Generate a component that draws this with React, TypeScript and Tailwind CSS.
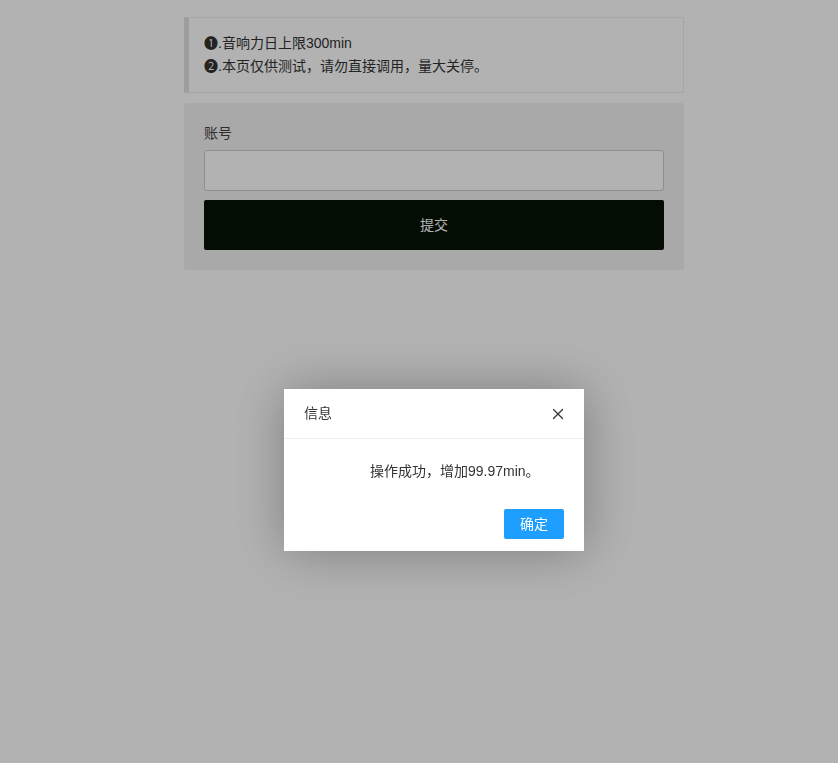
import { X } from 'lucide-react';

const font = { fontFamily: '"Liberation Sans", "Noto Sans CJK SC", sans-serif' };

const App = () => {
  return (
    <div className="relative min-h-[763px] bg-white text-[14px] text-[#333]" style={font}>
      <div className="ml-[184px] w-[500px] pt-[17px]">
        <div className="mb-[10px] border border-[#eee] border-l-[5px] border-l-[#e2e2e2] px-[15px] py-[14px] leading-[23px] text-[#333]">
          <div>❶.音响力日上限300min</div>
          <div>❷.本页仅供测试，请勿直接调用，量大关停。</div>
        </div>

        <div className="rounded-[3px] bg-[#f2f2f2] p-5">
          <label className="block leading-5 text-[#444]">账号</label>
          <input
            type="text"
            className="mt-[7px] block h-[41px] w-full rounded-[3px] border border-[#ccc] bg-white px-3 outline-none"
          />
          <button className="mt-[9px] block h-[50px] w-full rounded-[2px] bg-[#071306] text-white">
            提交
          </button>
        </div>
      </div>

      {/* layer overlay */}
      <div className="fixed inset-0 bg-black/30" />

      <div className="fixed left-[284px] top-[389px] w-[300px] bg-white shadow-[1px_1px_50px_rgba(0,0,0,0.3)]">
        <div className="flex h-[50px] items-center justify-between border-b border-[#eee] pl-5 pr-[17px]">
          <span className="text-[14px] text-[#333]">信息</span>
          <X className="h-[18px] w-[18px] text-[#333]" strokeWidth={1.6} />
        </div>
        <div className="pb-[28px] pl-[86px] pt-[22px] leading-[20px] text-[#333]">
          操作成功，增加99.97min。
        </div>
        <div className="flex justify-end px-5 pb-3">
          <button className="h-[30px] w-[60px] rounded-[2px] bg-[#1e9fff] text-[14px] text-white">
            确定
          </button>
        </div>
      </div>
    </div>
  );
};

export default App;
